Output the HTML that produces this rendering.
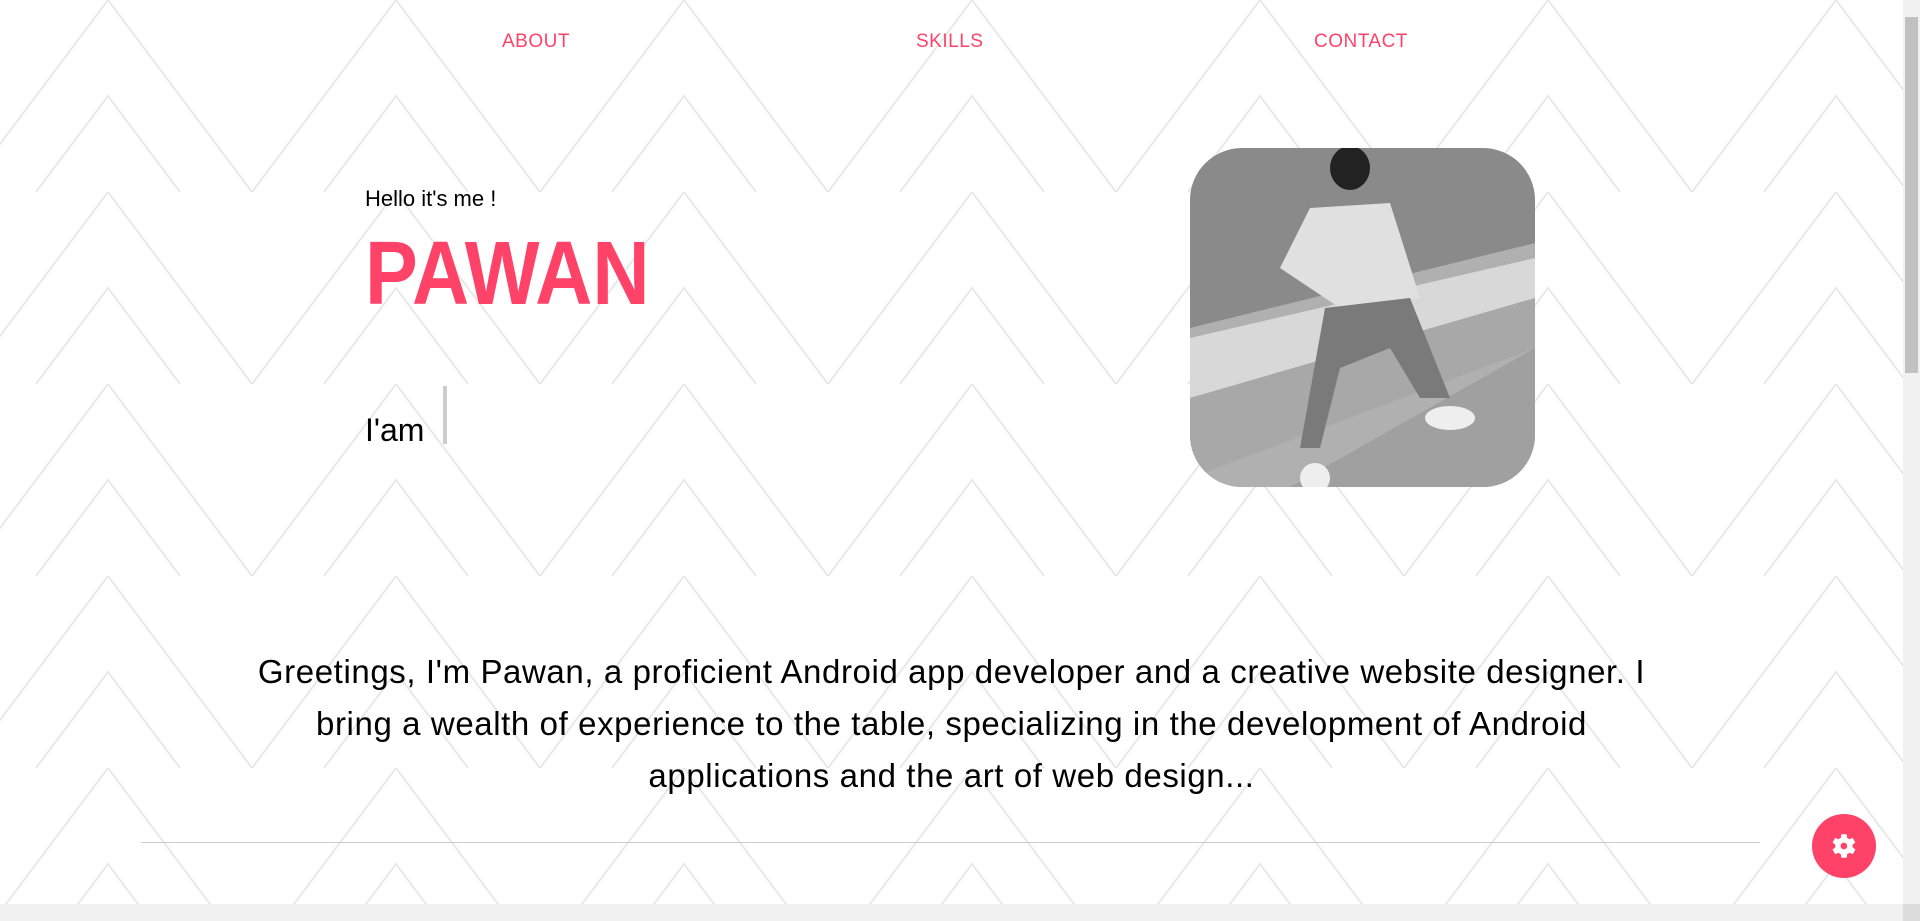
<!DOCTYPE html>
<html><head><meta charset="utf-8"><style>
html,body{margin:0;padding:0;width:1920px;height:921px;overflow:hidden;background:#fff;font-family:"Liberation Sans",sans-serif;}
#bg{position:absolute;left:0;top:0}
.nav{position:absolute;top:31px;font-size:19px;color:#ff4268;letter-spacing:0.5px}
</style></head><body>
<svg id="bg" width="1903" height="904">
<defs><pattern id="p" width="288" height="192" patternUnits="userSpaceOnUse" x="-36" y="0">
<path d="M0 192 L144 0 L288 192 M72 192 L144 96 L216 192" fill="none" stroke="#e8e8e8" stroke-width="2"/>
</pattern></defs>
<rect width="1903" height="904" fill="url(#p)"/>
</svg>
<div class="nav" style="left:502px">ABOUT</div>
<div class="nav" style="left:916px">SKILLS</div>
<div class="nav" style="left:1314px">CONTACT</div>
<div style="position:absolute;left:365px;top:186px;font-size:22px;color:#000">Hello it's me !</div>
<div style="position:absolute;left:365px;top:224px;font-size:90px;font-weight:bold;color:#ff4268;transform:scaleX(0.88);transform-origin:left top;line-height:100px">PAWAN</div>
<div style="position:absolute;left:365px;top:412px;font-size:32px;color:#000">I'am</div>
<div style="position:absolute;left:443px;top:386px;width:4px;height:58px;background:#ccc"></div>
<svg style="position:absolute;left:1190px;top:148px" width="345" height="339">
<defs><clipPath id="c"><rect width="345" height="339" rx="52"/></clipPath></defs>
<g clip-path="url(#c)">
<rect width="345" height="339" fill="#8a8a8a"/>
<polygon points="0,180 345,95 345,339 0,339" fill="#b0b0b0"/>
<polygon points="0,190 345,110 345,150 0,250" fill="#d8d8d8"/>
<polygon points="0,250 345,150 345,200 0,330" fill="#a8a8a8"/>
<polygon points="100,339 345,200 345,339" fill="#a0a0a0"/>
<ellipse cx="160" cy="20" rx="20" ry="22" fill="#222"/>
<polygon points="120,60 200,55 230,150 150,160 90,120" fill="#e0e0e0"/>
<polygon points="135,160 220,150 260,250 230,250 200,200 150,220 130,300 110,300" fill="#7a7a7a"/>
<ellipse cx="260" cy="270" rx="25" ry="12" fill="#eee"/>
<ellipse cx="125" cy="330" rx="15" ry="15" fill="#eee"/>
</g></svg>
<div style="position:absolute;left:0;width:1903px;top:646px;text-align:center;font-size:33px;letter-spacing:0.6px;line-height:52px;color:#000;white-space:nowrap">Greetings, I'm Pawan, a proficient Android app developer and a creative website designer. I<br>bring a wealth of experience to the table, specializing in the development of Android<br>applications and the art of web design...</div>
<div style="position:absolute;left:141px;width:1619px;top:842px;height:1px;background:#ccc"></div>
<div style="position:absolute;left:1812px;top:814px;width:64px;height:64px;border-radius:50%;background:#ff4268"></div>
<svg style="position:absolute;left:1828px;top:830px" width="32" height="32" viewBox="0 0 24 24"><path fill="#fff" d="M19.4 13a7.5 7.5 0 000-2l2.1-1.6-2-3.5-2.5 1a7 7 0 00-1.7-1L15 3.2h-4l-.4 2.7a7 7 0 00-1.7 1l-2.5-1-2 3.5L6.5 11a7.5 7.5 0 000 2l-2.1 1.6 2 3.5 2.5-1a7 7 0 001.7 1l.4 2.7h4l.4-2.7a7 7 0 001.7-1l2.5 1 2-3.5zM12.9 14.5a2.5 2.5 0 110-5 2.5 2.5 0 010 5z" transform="translate(-1 0)"/></svg>
<div style="position:absolute;left:1903px;top:0;width:17px;height:904px;background:#f1f1f1"></div>
<div style="position:absolute;left:1905px;top:17px;width:13px;height:356px;background:#c1c1c1"></div>
<div style="position:absolute;left:0;top:904px;width:1903px;height:17px;background:#f1f1f1"></div>
<div style="position:absolute;left:1903px;top:904px;width:17px;height:17px;background:#dcdcdc"></div>
</body></html>
